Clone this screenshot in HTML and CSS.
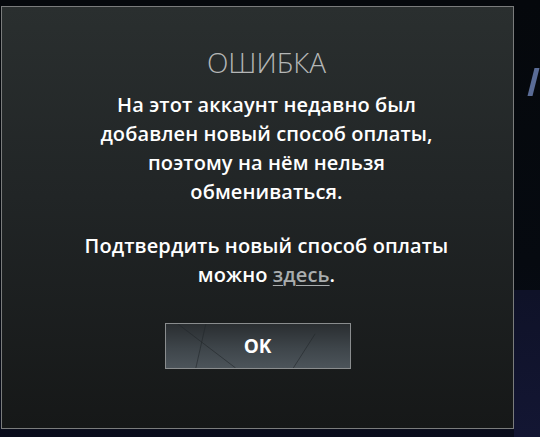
FILE: index.html
```html
<!doctype html>
<html lang="ru">

<head>
	<meta charset="UTF-8" />
	<meta name="viewport" content="width=device-width, initial-scale=1.0" />
	<title>Ошибка</title>
	<link rel="stylesheet" href="styles.css">
</head>

<body>
	<div class="backdrop">
		<div class="side-mark"></div>
		<div class="side-panel"></div>
	</div>
	<div class="dialog">
		<h1 class="dialog-title">ОШИБКА</h1>
		<div class="dialog-text">
			<p>На этот аккаунт недавно был<br>добавлен новый способ оплаты,<br>поэтому на нём нельзя<br>обмениваться.</p>
			<p>Подтвердить новый способ оплаты<br>можно <a href="#">здесь</a>.</p>
		</div>
		<button class="ok-btn">
			<svg class="ok-lines" viewBox="0 0 185 45" preserveAspectRatio="none">
				<path d="M12 0 L70 45" />
				<path d="M40 0 L30 45" />
				<path d="M150 10 L128 45" />
			</svg>
			<span>OK</span>
		</button>
	</div>
</body>

</html>
```

FILE: styles.css
```css
* {
	margin: 0;
	padding: 0;
	box-sizing: border-box;
}

body {
	width: 540px;
	height: 437px;
	overflow: hidden;
	background-color: #05080c;
	font-family: "Open Sans", "Noto Sans", sans-serif;
	position: relative;
	padding: 6px 0 0 1px;
}

.backdrop {
	position: absolute;
	top: 0;
	left: 0;
	width: 100%;
	height: 100%;
	background: linear-gradient(to bottom, #05080c 0%, #060a10 60%, #0a0d1c 100%);
}

.side-panel {
	position: absolute;
	left: 514px;
	top: 290px;
	width: 26px;
	height: 147px;
	background: linear-gradient(to bottom, #0f1228, #131633);
}

/* кусок фоновой надписи справа */
.side-mark {
	position: absolute;
	left: 531px;
	top: 68px;
	width: 5px;
	height: 28px;
	background: #5a6c96;
	transform: skewX(-14deg);
}

.dialog {
	position: relative;
	width: 513px;
	height: 423px;
	border: 1px solid #7a7c7c;
	background: linear-gradient(to bottom, #2a2f2f 0%, #212526 45%, #161818 100%);
	display: flex;
	flex-direction: column;
	align-items: center;
	text-align: center;
}

.dialog-title {
	margin-top: 33px;
	padding-left: 18px;
	font-size: 28px;
	font-weight: 300;
	color: #b4b6b6;
	line-height: 44px;
}

.dialog-text {
	margin-top: 6px;
	padding-left: 18px;
	color: #ffffff;
	font-size: 20px;
	font-weight: 600;
	line-height: 29px;
	letter-spacing: 0.1px;
}

.dialog-text p + p {
	margin-top: 25px;
}

.dialog-text a {
	color: #a9adae;
	text-decoration: underline;
	text-decoration-thickness: 1px;
	text-underline-offset: 3px;
}

.ok-btn {
	position: relative;
	margin-top: 34px;
	width: 186px;
	height: 46px;
	border: 1px solid #8a8d8e;
	background: linear-gradient(to bottom, #2a2e31 0%, #3e454a 55%, #4c545a 100%);
	color: #ffffff;
	font-family: "Open Sans", "Noto Sans", sans-serif;
	font-size: 19px;
	font-weight: 700;
	cursor: pointer;
	overflow: hidden;
}

.ok-lines {
	position: absolute;
	top: 0;
	left: 0;
	width: 100%;
	height: 100%;
}

.ok-lines path {
	stroke: #22272a;
	stroke-width: 1;
	fill: none;
	opacity: 0.6;
}

.ok-btn span {
	position: relative;
}
```
